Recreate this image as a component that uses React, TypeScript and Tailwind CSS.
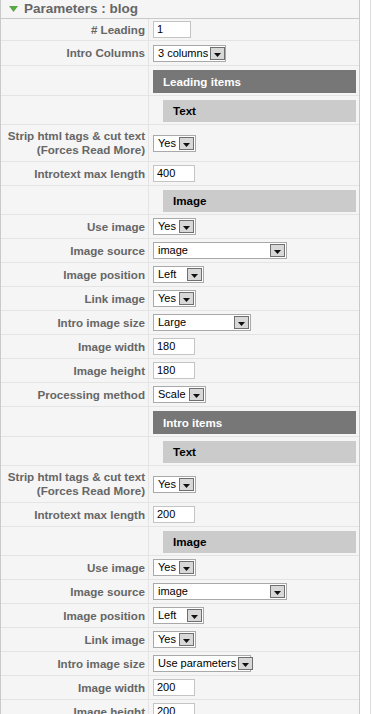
import React from 'react'

const font = { fontFamily: '"Liberation Sans", Arial, sans-serif' }

function Arrow() {
    return (
        <svg width="7" height="4" viewBox="0 0 7 4" className="mb-[2px]">
            <path d="M0 0h7L3.5 4z" fill="#111" />
        </svg>
    )
}

function Select({ value, w }: { value: string; w: string }) {
    return (
        <div className={`flex h-[17px] items-center justify-between gap-[2px] whitespace-nowrap border border-[#a9a9a9] bg-white pl-[4px] pr-[1px] text-[11px] text-black ${w}`}>
            <span className="leading-none">{value}</span>
            <span className="flex h-[13px] w-[15px] shrink-0 items-end justify-center border border-[#6f6f6f] bg-[#d8d8d8]">
                <Arrow />
            </span>
        </div>
    )
}

function Input({ value, w = 'w-[42px]' }: { value: string; w?: string }) {
    return (
        <div className={`flex h-[17px] items-center border border-[#c4c4c4] bg-white pl-[3px] text-[11px] text-black ${w}`}>
            {value}
        </div>
    )
}

function Row({ label, h = 'h-[24px]', children }: { label?: React.ReactNode; h?: string; children?: React.ReactNode }) {
    return (
        <div className={`flex border-b border-[#e4e4e4] ${h}`}>
            <div className="flex w-[148px] shrink-0 items-center justify-end border-r border-[#e4e4e4] pr-[3px] text-right text-[11.6px] font-bold leading-[14px] text-[#666]">
                {label}
            </div>
            <div className="flex flex-1 items-center pl-[4px] pr-[3px]">{children}</div>
        </div>
    )
}

function MainBar({ title }: { title: string }) {
    return (
        <div className="flex h-[30px] border-b border-[#e4e4e4]">
            <div className="w-[148px] shrink-0 border-r border-[#e4e4e4]" />
            <div className="flex-1 pl-[4px] pr-[3px] pt-[4px]">
                <div className="flex h-[23px] items-center bg-[#777] pl-[10px] text-[11.6px] font-bold text-white">{title}</div>
            </div>
        </div>
    )
}

function SubBar({ title }: { title: string }) {
    return (
        <div className="flex h-[29px] border-b border-[#e4e4e4]">
            <div className="w-[148px] shrink-0 border-r border-[#e4e4e4]" />
            <div className="flex-1 pl-[14px] pr-[3px] pt-[4px]">
                <div className="flex h-[22px] items-center bg-[#cbcbcb] pl-[10px] text-[11.6px] font-bold text-black">{title}</div>
            </div>
        </div>
    )
}

function Block({ title, maxLen, size, dim, proc }: { title: string; maxLen: string; size: string; dim: string; proc: boolean }) {
    return (
        <>
            <MainBar title={title} />
            <SubBar title="Text" />
            <Row h="h-[37px]" label={<span>Strip html tags &amp; cut text<br />(Forces Read More)</span>}>
                <Select value="Yes" w="w-[43px]" />
            </Row>
            <Row label="Introtext max length">
                <Input value={maxLen} />
            </Row>
            <SubBar title="Image" />
            <Row label="Use image"><Select value="Yes" w="w-[43px]" /></Row>
            <Row label="Image source"><Select value="image" w="w-[134px]" /></Row>
            <Row label="Image position"><Select value="Left" w="w-[51px]" /></Row>
            <Row label="Link image"><Select value="Yes" w="w-[43px]" /></Row>
            <Row label="Intro image size"><Select value={size} w="w-[98px]" /></Row>
            <Row label="Image width"><Input value={dim} /></Row>
            <Row label="Image height"><Input value={dim} /></Row>
            {proc && <Row label="Processing method"><Select value="Scale" w="w-[53px]" /></Row>}
        </>
    )
}

export default function App() {
    return (
        <div className="flex h-[714px] w-[376px] overflow-hidden bg-white" style={font}>
            <div className="w-[360px] shrink-0 border-x border-[#c9c9c9] bg-[#f5f5f5]">
                <div className="flex h-[19px] items-center border-b border-[#c9c9c9] pl-[8px]">
                    <svg width="9" height="6" viewBox="0 0 9 6" className="mr-[6px]">
                        <path d="M0 0h9L4.5 6z" fill="#5aa845" />
                    </svg>
                    <span className="text-[13.5px] font-bold text-[#666]">Parameters : blog</span>
                </div>
                <Row h="h-[22px]" label="# Leading"><Input value="1" w="w-[38px]" /></Row>
                <Row h="h-[25px]" label="Intro Columns"><Select value="3 columns" w="w-[73px]" /></Row>
                <Block title="Leading items" maxLen="400" size="Large" dim="180" proc />
                <Block title="Intro items" maxLen="200" size="Use parameters" dim="200" proc={false} />
            </div>
            <div className="ml-[10px] w-[1px] bg-[#dcdcdc]" />
        </div>
    )
}
